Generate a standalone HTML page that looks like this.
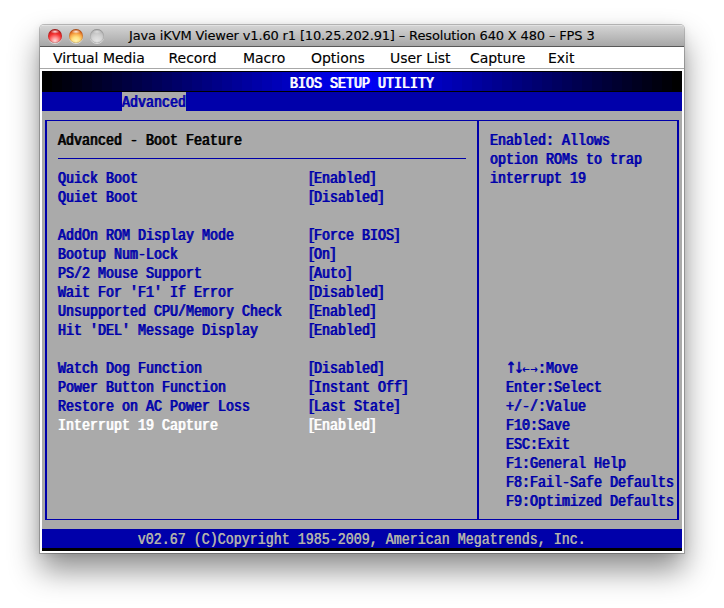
<!DOCTYPE html>
<html lang="en"><head><meta charset="utf-8"><title>Java iKVM Viewer</title>
<style>
html,body{margin:0;padding:0;background:#fff;}
body{width:724px;height:608px;overflow:hidden;position:relative;font-family:"Liberation Sans",sans-serif;}
#win{position:absolute;left:40px;top:25px;width:644px;height:528px;background:#fff;border-radius:4px 4px 0 0;
 box-shadow:0 0 0 1px rgba(0,0,0,.23),0 17px 31px rgba(0,0,0,.45),0 1px 9px rgba(0,0,0,.10);}
#tb{position:absolute;left:0;top:0;width:644px;height:22px;border-radius:4px 4px 0 0;
 background:linear-gradient(#e4e4e4 0,#e0e0e0 1px,#d2d2d2 1.5px,#a8a8a8 20.6px,#585858 21.2px,#585858 22px);}
#title{position:absolute;left:89px;top:0px;-webkit-text-stroke:0.12px #000;height:22px;line-height:22px;font-family:"DejaVu Sans","Liberation Sans",sans-serif;font-size:13px;letter-spacing:-0.15px;color:#000;white-space:nowrap;}
.tl{position:absolute;top:4px;width:14px;height:14px;border-radius:50%;box-sizing:border-box;}
#mb{position:absolute;left:0;top:22px;width:644px;height:22px;background:#fff;border-bottom:1px solid #a8a8a8;box-sizing:border-box;}
#mb span{position:absolute;top:1px;-webkit-text-stroke:0.12px #000;line-height:21px;font-family:"DejaVu Sans","Liberation Sans",sans-serif;font-size:14px;letter-spacing:-0.04px;color:#000;white-space:nowrap;}
#bios{position:absolute;left:2px;top:46px;width:640px;height:480px;background:#aaaaaa;overflow:hidden;}
#r0{position:absolute;left:0;top:0;width:640px;height:21px;background:linear-gradient(to right,#000000 0px,#000000 10px,#000008 10px,#000008 20px,#000010 20px,#000010 30px,#000018 30px,#000018 40px,#000020 40px,#000020 50px,#000028 50px,#000028 60px,#000030 60px,#000030 70px,#000038 70px,#000038 80px,#000040 80px,#000040 90px,#000048 90px,#000048 100px,#000050 100px,#000050 110px,#000058 110px,#000058 120px,#000060 120px,#000060 130px,#000068 130px,#000068 140px,#000070 140px,#000070 150px,#000078 150px,#000078 160px,#000080 160px,#000080 170px,#000088 170px,#000088 180px,#000090 180px,#000090 190px,#000098 190px,#000098 200px,#0000a0 200px,#0000a0 210px,#0000a8 210px,#0000a8 220px,#0000b0 220px,#0000b0 230px,#0000b8 230px,#0000b8 240px,#0000c0 240px,#0000c0 250px,#0000c8 250px,#0000c8 260px,#0000d0 260px,#0000d0 270px,#0000d8 270px,#0000d8 280px,#0000e0 280px,#0000e0 290px,#0000e8 290px,#0000e8 300px,#0000f0 300px,#0000f0 310px,#0000f8 310px,#0000f8 320px,#0000f8 320px,#0000f8 330px,#0000f0 330px,#0000f0 340px,#0000e8 340px,#0000e8 350px,#0000e0 350px,#0000e0 360px,#0000d8 360px,#0000d8 370px,#0000d0 370px,#0000d0 380px,#0000c8 380px,#0000c8 390px,#0000c0 390px,#0000c0 400px,#0000b8 400px,#0000b8 410px,#0000b0 410px,#0000b0 420px,#0000a8 420px,#0000a8 430px,#0000a0 430px,#0000a0 440px,#000098 440px,#000098 450px,#000090 450px,#000090 460px,#000088 460px,#000088 470px,#000080 470px,#000080 480px,#000078 480px,#000078 490px,#000070 490px,#000070 500px,#000068 500px,#000068 510px,#000060 510px,#000060 520px,#000058 520px,#000058 530px,#000050 530px,#000050 540px,#000048 540px,#000048 550px,#000040 550px,#000040 560px,#000038 560px,#000038 570px,#000030 570px,#000030 580px,#000028 580px,#000028 590px,#000020 590px,#000020 600px,#000018 600px,#000018 610px,#000010 610px,#000010 620px,#000008 620px,#000008 630px,#000000 630px,#000000 640px);border-top:1px solid #000;border-bottom:1px solid #000;box-sizing:border-box;}
#r1{position:absolute;left:0;top:21px;width:640px;height:19px;background:#0000aa;}
#r24{position:absolute;left:0;top:458px;width:640px;height:19px;background:#0000aa;}
#blk{position:absolute;left:0;top:477px;width:640px;height:3px;background:#000;}
.t{position:absolute;font-family:"Liberation Mono",monospace;font-size:13.333px;line-height:16px;height:16px;white-space:pre;
 transform:scaleY(1.3);transform-origin:0 0;color:#0000aa;text-shadow:1px 0 0 currentColor;margin-left:-0.5px;margin-top:0.7px;}
.t.w{color:#fff;}
.t.k{color:#000;}
.t.f{color:#b2b2aa;text-shadow:0.6px 0 0 currentColor;}
#tab{position:absolute;left:80px;top:21px;width:64px;height:19px;background:#aaaaaa;}
.ln{position:absolute;background:#0000aa;}
.t i{font-style:normal;display:inline-block;width:8px;text-align:center;line-height:0;font-family:"DejaVu Sans",sans-serif;}
.t i.av{font-size:12px;}
.t i.ah{font-size:8.5px;text-shadow:0.5px 0 0 currentColor;}
.t b{font-weight:normal;position:relative;}
.t b.lb{left:1.5px;}
.t b.rb{left:-1px;}

</style></head>
<body>
<div id="win">
 <div id="tb">
  <div class="tl" style="left:8px;background:radial-gradient(ellipse 4.5px 2px at 50% 19%,rgba(255,255,255,.85),rgba(255,255,255,0) 100%),radial-gradient(circle at 50% 84%,#ffdcdc 0,#ff9090 24%,#f53434 50%,#cf2020 70%,#6e1010 100%);box-shadow:0 1px 0 rgba(255,255,255,.55),inset 0 0 1px rgba(90,10,10,.9);"></div>
  <div class="tl" style="left:29px;background:radial-gradient(ellipse 4.5px 2px at 50% 19%,rgba(255,255,255,.85),rgba(255,255,255,0) 100%),radial-gradient(circle at 50% 84%,#fff4b0 0,#ffe080 28%,#f8a848 52%,#d8641c 72%,#7a300c 100%);box-shadow:0 1px 0 rgba(255,255,255,.55),inset 0 0 1px rgba(100,50,10,.9);"></div>
  <div class="tl" style="left:50px;background:radial-gradient(ellipse 4.5px 2px at 50% 19%,rgba(255,255,255,.5),rgba(255,255,255,0) 100%),radial-gradient(circle at 50% 84%,#e4e4e4 0,#d8d8d8 30%,#c8c8c8 55%,#b0b0b0 75%,#808080 100%);box-shadow:0 1px 0 rgba(255,255,255,.55),inset 0 0 1px rgba(70,70,70,.9);"></div>
  <div id="title">Java iKVM Viewer v1.60 r1 [10.25.202.91] &ndash; Resolution 640 X 480 &ndash; FPS 3</div>
 </div>
 <div id="mb">
  <span style="left:13px">Virtual Media</span>
  <span style="left:128.5px">Record</span>
  <span style="left:203px">Macro</span>
  <span style="left:271px">Options</span>
  <span style="left:350px">User List</span>
  <span style="left:430px">Capture</span>
  <span style="left:508px">Exit</span>
 </div>
 <div id="bios">
  <div id="r0"></div>
  <div id="r1"></div>
  <div id="tab"></div>
  <div id="r24"></div>
  <div id="blk"></div>
  <!-- box -->
  <div class="ln" style="left:3px;top:49px;width:2px;height:400px"></div>
  <div class="ln" style="left:635px;top:49px;width:2px;height:400px"></div>
  <div class="ln" style="left:3px;top:48.7px;width:634px;height:1.4px"></div>
  <div class="ln" style="left:3px;top:447.7px;width:634px;height:1.4px"></div>
  <div class="ln" style="left:435px;top:49px;width:2px;height:400px"></div>
  <div class="ln" style="left:16px;top:86.9px;width:408px;height:1.2px"></div>
<span class="t w" style="left:248px;top:2px">BIOS SETUP UTILITY</span>
<span class="t b tab" style="left:80px;top:21px">Advanced</span>
<span class="t k" style="left:16px;top:59px">Advanced - Boot Feature</span>
<span class="t b" style="left:16px;top:97px">Quick Boot</span>
<span class="t b" style="left:264px;top:97px"><b class="lb">[</b>Enabled<b class="rb">]</b></span>
<span class="t b" style="left:16px;top:116px">Quiet Boot</span>
<span class="t b" style="left:264px;top:116px"><b class="lb">[</b>Disabled<b class="rb">]</b></span>
<span class="t b" style="left:16px;top:154px">AddOn ROM Display Mode</span>
<span class="t b" style="left:264px;top:154px"><b class="lb">[</b>Force BIOS<b class="rb">]</b></span>
<span class="t b" style="left:16px;top:173px">Bootup Num-Lock</span>
<span class="t b" style="left:264px;top:173px"><b class="lb">[</b>On<b class="rb">]</b></span>
<span class="t b" style="left:16px;top:192px">PS/2 Mouse Support</span>
<span class="t b" style="left:264px;top:192px"><b class="lb">[</b>Auto<b class="rb">]</b></span>
<span class="t b" style="left:16px;top:211px">Wait For 'F1' If Error</span>
<span class="t b" style="left:264px;top:211px"><b class="lb">[</b>Disabled<b class="rb">]</b></span>
<span class="t b" style="left:16px;top:230px">Unsupported CPU/Memory Check</span>
<span class="t b" style="left:264px;top:230px"><b class="lb">[</b>Enabled<b class="rb">]</b></span>
<span class="t b" style="left:16px;top:249px">Hit 'DEL' Message Display</span>
<span class="t b" style="left:264px;top:249px"><b class="lb">[</b>Enabled<b class="rb">]</b></span>
<span class="t b" style="left:16px;top:287px">Watch Dog Function</span>
<span class="t b" style="left:264px;top:287px"><b class="lb">[</b>Disabled<b class="rb">]</b></span>
<span class="t b" style="left:16px;top:306px">Power Button Function</span>
<span class="t b" style="left:264px;top:306px"><b class="lb">[</b>Instant Off<b class="rb">]</b></span>
<span class="t b" style="left:16px;top:325px">Restore on AC Power Loss</span>
<span class="t b" style="left:264px;top:325px"><b class="lb">[</b>Last State<b class="rb">]</b></span>
<span class="t w" style="left:16px;top:344px">Interrupt 19 Capture</span>
<span class="t w" style="left:264px;top:344px"><b class="lb">[</b>Enabled<b class="rb">]</b></span>
<span class="t b" style="left:448px;top:59px">Enabled: Allows</span>
<span class="t b" style="left:448px;top:78px">option ROMs to trap</span>
<span class="t b" style="left:448px;top:97px">interrupt 19</span>
<span class="t b" style="left:464px;top:287px"><i class="av">↑</i><i class="av">↓</i><i class="ah">←</i><i class="ah">→</i>:Move</span>
<span class="t b" style="left:464px;top:306px">Enter:Select</span>
<span class="t b" style="left:464px;top:325px">+/-/:Value</span>
<span class="t b" style="left:464px;top:344px">F10:Save</span>
<span class="t b" style="left:464px;top:363px">ESC:Exit</span>
<span class="t b" style="left:464px;top:382px">F1:General Help</span>
<span class="t b" style="left:464px;top:401px">F8:Fail-Safe Defaults</span>
<span class="t b" style="left:464px;top:420px">F9:Optimized Defaults</span>
<span class="t f" style="left:96px;top:458px">v02.67 (C)Copyright 1985-2009, American Megatrends, Inc.</span>
 </div>
</div>

</body></html>
